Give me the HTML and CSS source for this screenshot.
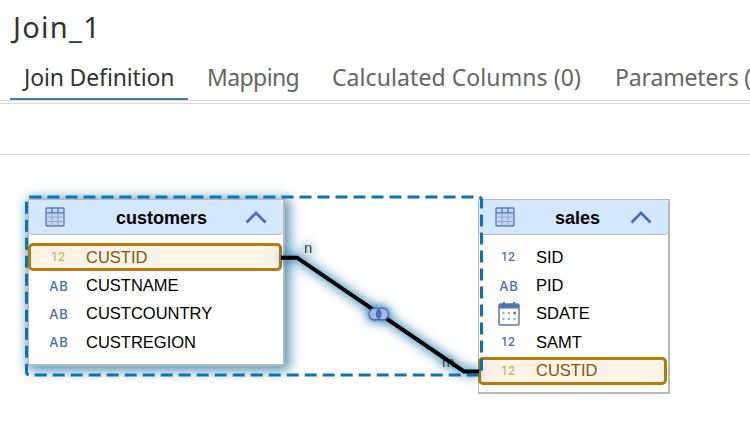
FILE: index.html
```
<!DOCTYPE html>
<html lang="en">
<head>
<meta charset="utf-8">
<title>Join_1</title>
<link rel="stylesheet" href="styles.css">
</head>
<body>
<svg class="defs" width="0" height="0">
  <symbol id="table" viewBox="0 0 20 20">
    <rect x="1" y="1" width="18" height="18" rx="1" fill="#c3d5f1" stroke="#5579b7" stroke-width="1.3"/>
    <path d="M1 5.8H19M7 1V6M13 1V6" stroke="#5579b7" stroke-width="1.3"/>
    <path d="M7 6V19M13 6V19M2.5 10H17.5M2.5 14.5H17.5" stroke="#8fa8d6" stroke-width="1.1"/>
  </symbol>
  <symbol id="chevron" viewBox="0 0 22 13">
    <path d="M1.5 11.5L11 2L20.5 11.5" fill="none" stroke="#4a6fb0" stroke-width="2.7"/>
  </symbol>
  <symbol id="calendar" viewBox="0 0 22 24">
    <rect x="1" y="2" width="20" height="21" rx="1.5" fill="#fff" stroke="#5579b7" stroke-width="1.5"/>
    <path d="M1 2H21V6.5H1Z" fill="#4f73b3"/>
    <path d="M6 0V4M16 0V4" stroke="#4f73b3" stroke-width="2"/>
    <path d="M4.5 11H6.5M10 11H12M4.5 17H6.5M10 17H12M15.5 17H17.5" stroke="#93abd8" stroke-width="2.2"/>
    <path d="M15.5 11H18" stroke="#4f73b3" stroke-width="2.6"/>
  </symbol>
</svg>
<header class="title"><h1>Join_1</h1></header>
<nav class="tabs">
  <span class="tab active">Join Definition</span>
  <span class="tab mapping">Mapping</span>
  <span class="tab columns">Calculated Columns (0)</span>
  <span class="tab params">Parameters (</span>
</nav>
<div class="toolbar"></div>
<main class="canvas">
  <section class="node customers">
    <div class="head"><svg class="table"><use href="#table"/></svg><b>customers</b><svg class="chevron"><use href="#chevron"/></svg></div>
    <div class="rows">
      <div class="row key"><i>12</i><span>CUSTID</span></div>
      <div class="row"><i class="ab">AB</i><span>CUSTNAME</span></div>
      <div class="row"><i class="ab">AB</i><span>CUSTCOUNTRY</span></div>
      <div class="row"><i class="ab">AB</i><span>CUSTREGION</span></div>
    </div>
  </section>
  <section class="node sales">
    <div class="head"><svg class="table"><use href="#table"/></svg><b>sales</b><svg class="chevron"><use href="#chevron"/></svg></div>
    <div class="rows">
      <div class="row"><i>12</i><span>SID</span></div>
      <div class="row"><i class="ab">AB</i><span>PID</span></div>
      <div class="row"><svg class="calendar"><use href="#calendar"/></svg><span>SDATE</span></div>
      <div class="row"><i>12</i><span>SAMT</span></div>
      <div class="row key"><i>12</i><span>CUSTID</span></div>
    </div>
  </section>
  <svg class="links" viewBox="0 155 750 285">
    <rect x="26.5" y="197" width="455" height="178" rx="3" fill="none" stroke="#0a75b5" stroke-width="3" stroke-dasharray="12 6"/>
    <g class="glow">
      <text x="304" y="253">n</text>
      <text x="442" y="367">m</text>
      <path d="M281 257.7H297L464 371.5H479" fill="none" stroke="#000" stroke-width="4"/>
      <g fill="#a3b9e3" stroke="#4a6fb8" stroke-width="1.3">
        <circle cx="375" cy="314" r="6"/>
        <circle cx="382.5" cy="314" r="6"/>
        <path d="M378.75 309.3a6 6 0 0 1 0 9.4a6 6 0 0 1 0-9.4z" fill="#4a6fb8"/>
      </g>
    </g>
  </svg>
</main>
</body>
</html>
```
FILE: styles.css
```
* { box-sizing: border-box; }
body {
  margin: 0;
  width: 750px;
  height: 440px;
  overflow: hidden;
  background: #fff;
  font-family: "Liberation Sans", Arial, sans-serif;
}
.defs { position: absolute; }
.title { height: 56px; padding-left: 13px; }
.title h1 {
  margin: 0;
  font: 400 29px/54px "Noto Sans", sans-serif;
  letter-spacing: 1.3px;
  color: #333;
}
.tabs {
  display: flex;
  height: 45px;
  padding-left: 10px;
  border-bottom: 1px solid #d9d9d9;
  white-space: nowrap;
}
.tab {
  flex: none;
  height: 44px;
  padding: 0 14px;
  font: 400 23px/43px "Noto Sans", sans-serif;
  color: #666;
}
.tab.active {
  width: 178px;
  margin-right: 5px;
  border-bottom: 2px solid #427cac;
  letter-spacing: -.14px;
  color: #333;
}
.tab.mapping { width: 125px; letter-spacing: -.6px; }
.tab.columns { width: 283px; letter-spacing: .08px; }
.tab.params { letter-spacing: -.15px; }
.toolbar {
  height: 52px;
  margin-top: 2px;
  border-top: 1px solid #d9d9d9;
  border-bottom: 1px solid #d9d9d9;
}
.canvas { position: relative; height: 285px; }
.node {
  position: absolute;
  background: #fff;
  border: 1px solid #b8b8b8;
  border-right-width: 2px;
  border-bottom-width: 2px;
}
.customers {
  left: 28px;
  top: 44px;
  width: 257px;
  height: 167px;
  box-shadow: 2px 2px 12px 2px rgba(10, 100, 150, .75);
}
.sales { left: 478px; top: 44px; width: 192px; height: 195px; }
.head {
  display: flex;
  align-items: center;
  height: 35px;
  padding: 0 16px;
  border-bottom: 1px solid #aab8c5;
  border-radius: 4px;
  background: #d3e8fc;
}
.head b {
  flex: 1;
  text-align: center;
  font-size: 18px;
  line-height: 34px;
  padding-top: 2px;
}
.customers b { padding-left: 13px; }
.sales b { padding-left: 10px; }
.table { width: 20px; height: 20px; }
.chevron { width: 22px; height: 13px; }
.rows { padding-top: 8px; }
.row {
  display: flex;
  align-items: center;
  height: 28.4px;
  margin: 0 1px 0 -1px;
  padding-left: 21px;
  font-size: 16.5px;
  color: #000;
}
.row i, .calendar { flex: none; width: 20px; margin-right: 17px; }
.row i {
  text-align: center;
  font: 500 12px/20px "Inter", sans-serif;
  letter-spacing: 1.2px;
  color: #4a6fb0;
}
.row i.ab { font-size: 13px; letter-spacing: .8px; }
.calendar { width: 22px; height: 24px; margin: 0 16px 0 -1px; }
.row.key {
  border: 3px solid #b27b0a;
  border-radius: 5px;
  padding-left: 18px;
  background: #fef3e7;
  color: #8d520b;
}
.row.key i { color: #d5ae60; }
.links { position: absolute; left: 0; top: 0; width: 750px; height: 285px; }
.links text { font-size: 15px; fill: #444; }
.glow { filter: drop-shadow(0 0 4px rgba(8, 105, 160, .8)) drop-shadow(0 0 6px rgba(8, 105, 160, .55)); }
```
